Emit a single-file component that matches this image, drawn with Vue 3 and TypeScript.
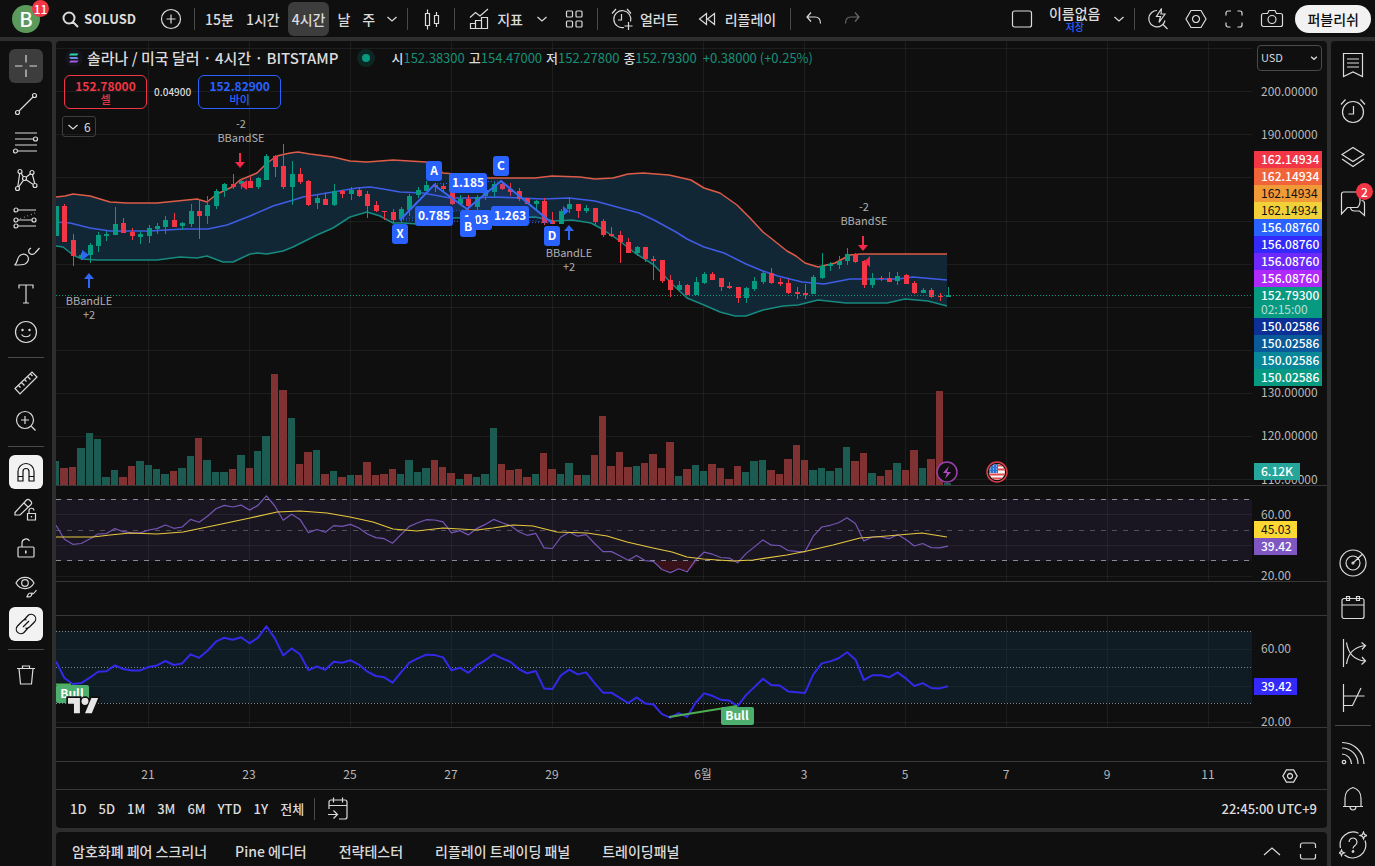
<script setup lang="ts">
import { ref } from 'vue'

type Candle = [dir: 0 | 1, top: number, bottom: number, high: number, low: number]
type Point = [number, number]

/* ---------- icons: stroked paths on a 28 unit box ---------- */
const ring = (x: number, y: number, r: number) =>
  `M${x - r} ${y}a${r} ${r} 0 1 0 ${2 * r} 0a${r} ${r} 0 1 0 ${-2 * r} 0`

const icons: Record<string, string> = {
  search: ring(13, 13, 5.5) + 'M17 17l5 5',
  plusCircle: ring(14, 14, 9.5) + 'M14 9.5v9M9.5 14h9',
  chevron: 'M9.5 12l4.5 4 4.5-4',
  chevronUp: 'M6 18l8-7 8 7',
  candles: 'M8.5 8.5h4v12h-4zM10.500 4.500v4M10.500 20.500v4M17.500 10.500h4v8h-4zM19.500 7v3.500M19.500 18.500v3.500',
  indicators: 'M5 12.500l5.500-5 4.500 3.500 8-7M5.500 23.500v-5h5v5zM10.500 23.500v-8h6v8zM16.500 23.500v-11h6v11z',
  grid: 'M7.500 6h4a1 1 0 0 1 1 1v4a1 1 0 0 1-1 1h-4a1 1 0 0 1-1-1v-4a1 1 0 0 1 1-1zM17 6h4a1 1 0 0 1 1 1v4a1 1 0 0 1-1 1h-4a1 1 0 0 1-1-1v-4a1 1 0 0 1 1-1zM7.500 16h4a1 1 0 0 1 1 1v4a1 1 0 0 1-1 1h-4a1 1 0 0 1-1-1v-4a1 1 0 0 1 1-1zM17 16h4a1 1 0 0 1 1 1v4a1 1 0 0 1-1 1h-4a1 1 0 0 1-1-1v-4a1 1 0 0 1 1-1z',
  alertAdd: 'M16 22.500a8.500 8.500 0 1 1 6.500-6M13.500 9v6H10M4 8.500l4-4.500M19 4l4 4.500M20.500 17v8M16.500 21h8',
  rewind: 'M13.500 8.500v11l-7-5.500zM21.500 8.500v11l-7-5.500z',
  undo: 'M11 7.500l-4 4.500 4 4.500M7 12h8c4 0 5.500 2.500 5.500 6.500',
  redo: 'M17 7.500l4 4.500-4 4.500M21 12h-8c-4 0-5.500 2.500-5.500 6.500',
  layout: 'M6.500 6h15a2 2 0 0 1 2 2v12a2 2 0 0 1-2 2h-15a2 2 0 0 1-2-2v-12a2 2 0 0 1 2-2z',
  quickSearch: 'M13 5.500a8.200 8.200 0 1 0 8 10M19 19.500l4.500 4.500M17.500 3.500l-5 8h4l-1.500 6 6-8.500h-4z',
  hexagon: 'M9 5.500h10l5 8.500-5 8.500h-10l-5-8.500z' + ring(14, 14, 3.5),
  fullscreen: 'M6 10.500v-2.500a2 2 0 0 1 2-2h3M17.500 6h2.500a2 2 0 0 1 2 2v2.500M22 17.500v2.500a2 2 0 0 1-2 2h-2.500M10.500 22h-2.500a2 2 0 0 1-2-2v-2.500',
  camera: 'M5.500 8.500h4l1.500-3h6l1.500 3h4a2 2 0 0 1 2 2v9a2 2 0 0 1-2 2h-17a2 2 0 0 1-2-2v-9a2 2 0 0 1 2-2z' + ring(14, 14.5, 4),
  crosshair: 'M14 3v7.500M14 17.500v7.500M3 14h7.500M17.500 14h7.500',
  trend: ring(5.5, 22.5, 2) + ring(22.5, 5.5, 2) + 'M7 21l14-14',
  fib: 'M3 5h22M3 11h18M3 17h22M6 23h19' + ring(23.5, 11, 2) + ring(3.5, 23, 2),
  pattern: ring(5.5, 22.5, 2) + ring(8, 5.5, 2) + ring(12.5, 12.5, 2) + ring(20, 6.5, 2) + ring(23, 19.5, 2) +
    'M5.800 20.500l1.900-13M9.200 7.200l2.200 3.700M14 11.200l4.500-3.500M20.400 8.500l2.300 9M6.700 20.800l4.700-6.500M14.200 13.700l7 4.700',
  projection: ring(4, 6, 2) + ring(4, 16, 2) + ring(22, 16, 2) + ring(4, 22, 2) +
    'M6 6h18M6 16h14M6 22h18M8.500 14.500l.6-.2M12 13.200l.6-.2M15.500 11.900l.6-.2M19 10.600l.6-.2M22.500 9.200l.6-.2',
  brush: 'M2.500 23c3-1.500 2.500-6 4.500-8.500 2.500-3 6.500-3 8.500-.5 2 3 .500 6.500-2.500 8-2.500 1-6 1-10.500 1zM17 7.500c-1.500 4 3.500 7 6.500 3l4-4.500M17 7.500l2-1.500',
  text: 'M7 8.500v-3.500h14v3.500M14 5v18M11 23h6',
  smile: ring(14, 14, 10.5) + ring(10.5, 12, 0.6) + ring(17.5, 12, 0.6) + 'M9.500 16.500c2 3 7 3 9 0',
  ruler: 'M3 19.500l17-16.500 5 5-17 17zM6.500 16.500l2 2M9.500 13.500l3 3M12.500 10.500l2 2M15.500 7.500l3 3M18.500 5l2 2',
  zoomIn: ring(13, 13, 8.5) + 'M13 9v8M9 13h8M19.500 19.500l4 4',
  magnet: 'M6 23v-9.500a8 8 0 0 1 16 0v9.500h-5v-9.500a3 3 0 0 0-6 0v9.500zM6 18.500h5M17 18.500h5',
  pencilLock: 'M3 16.500l11.500-12.500a2 2 0 0 1 3 0l1.500 1.500a2 2 0 0 1 0 3l-11 10.500h-5zM12 7l4.500 4.500M15.500 17.500h8v6.500h-8zM17 17.500v-2.500a2.500 2.500 0 0 1 5-.5M19.500 20v1.500',
  lock: 'M7 13h14a1 1 0 0 1 1 1v8a1 1 0 0 1-1 1h-14a1 1 0 0 1-1-1v-8a1 1 0 0 1 1-1zM10 13v-4a4 4 0 0 1 7.500-2M14 16.500v3M13.600 16.500v3',
  eyeBrush: 'M4 11c4-7.500 14-7.500 18 0-4 7.500-14 7.500-18 0z' + ring(13, 11, 3.3) + 'M14.500 25c1.500-.500 1-4 3.500-4 2 0 2 2.500.500 3.500-1 .500-2.500.500-4 .500zM20 20.500c0 2 1.500 1.500 2.500 0l2-2.500',
  link: 'M12 10l4-4.500a4.600 4.600 0 0 1 6.500 6.500l-5 5a4.600 4.600 0 0 1-4 1.200M16 18l-4 4.500a4.600 4.600 0 0 1-6.500-6.500l5-5a4.600 4.600 0 0 1 4-1.200M11 17l6-6',
  trash: 'M5 7.500h18M10.500 7.500v-2.500h7v2.500M7 7.500l1.500 15.500h11l1.500-15.500',
  watchlist: 'M4.500 2.500h19v23l-9.500-4.500-9.500 4.500zM8 8h12M8 12h12M8 16h12',
  alarm: ring(14, 15, 10.5) + 'M14.500 9v8H9.500M2 7.500l4.500-5M21.500 2.500l4.500 5',
  layers: 'M3 11.500l11-7 11 7-11 7zM3 16l11 7.500 11-7.500',
  chat: 'M2.500 25v-20a2 2 0 0 1 2-2h14.500a2 2 0 0 1 2 2v8c0 3-1 4-2.500 5.500h-10zM22.500 11.500a3 3 0 0 1 3 3v12l-5-4.500h-5a4 4 0 0 1-4-3.500',
  target: ring(14, 14, 13) + ring(14, 14, 7) + ring(14, 14, 1) + 'M14 14l9-8.500',
  calendar: 'M5 4.500h18a2 2 0 0 1 2 2v16a2 2 0 0 1-2 2h-18a2 2 0 0 1-2-2v-16a2 2 0 0 1 2-2zM3 11h22M7.500 2.500h3v4h-3zM17.500 2.500h3v4h-3z',
  forecast: 'M4.500 0v28M7.500 3.500c1.500 10 7 17.500 18.500 18.500M7.500 25c1.500-10 7-17 18.500-18.500M22.500 3.500l4 3-3.500 4M23 18l3.500 4-4 3.500',
  spread: 'M4.500 0v28M4.500 12h21M4.500 21.500h9l8.500-17.500',
  feed: ring(5, 23, 1.7) + 'M3 15a10 10 0 0 1 9.500 10M3 9a16 16 0 0 1 16 16M3 3.500a22 22 0 0 1 22 21.500',
  bell: 'M4 21.500h20M6 21.500v-8c0-6 3-9.500 8-11 5 1.500 8 5 8 11v8M11 22c.500 4 5.500 4 6 0',
  help: 'M19.500 2.200a13 13 0 0 0-18 14.800M5.500 24a13 13 0 0 0 20.500-14.500M10 11a4 4 0 1 1 6 3.500c-1.500 1-2 1.500-2 3' + ring(14, 20.5, 0.8) + 'M24.500 1l1 2.500 2.500 1-2.500 1-1 2.500-1-2.500-2.500-1 2.500-1zM2.500 19l.8 2 2 .8-2 .8-.8 2-.8-2-2-.8 2-.8z',
  goTo: 'M6 14v-7a2 2 0 0 1 2-2h14a2 2 0 0 1 2 2v15a2 2 0 0 1-2 2h-6M6 10.500h18M10.500 2.500v5M19.500 2.500v5M5 19.500h9M10.500 15.500l4 4-4 4',
  maximize: 'M6.500 11v-3a2 2 0 0 1 2-2h11a2 2 0 0 1 2 2v3M21.500 17v3a2 2 0 0 1-2 2h-11a2 2 0 0 1-2-2v-3',
}

const intervals = ['15분', '1시간', '4시간', '날', '주']
const interval = ref('4시간')
const currency = ref('USD')

const tools: { icon: string; label: string; look?: string; rule?: boolean }[] = [
  { icon: 'crosshair', label: '크로스', look: 'hovered' },
  { icon: 'trend', label: '추세선' },
  { icon: 'fib', label: '피보나치' },
  { icon: 'pattern', label: '패턴' },
  { icon: 'projection', label: '예측' },
  { icon: 'brush', label: '브러시' },
  { icon: 'text', label: '텍스트' },
  { icon: 'smile', label: '아이콘' },
  { icon: 'ruler', label: '측정', rule: true },
  { icon: 'zoomIn', label: '확대' },
  { icon: 'magnet', label: '자석', look: 'on', rule: true },
  { icon: 'pencilLock', label: '드로잉 유지' },
  { icon: 'lock', label: '드로잉 잠금' },
  { icon: 'eyeBrush', label: '드로잉 숨기기' },
  { icon: 'link', label: '동기화', look: 'on' },
  { icon: 'trash', label: '삭제', rule: true },
]
const sideTop = [['watchlist', '왓치리스트'], ['alarm', '얼러트'], ['layers', '오브젝트'], ['chat', '채팅']]
const sideMid = [['target', '스크리너'], ['calendar', '캘린더'], ['forecast', '예측'], ['spread', '스프레드']]
const sideEnd = [['feed', '피드'], ['bell', '알림'], ['help', '도움말']]
const ranges = ['1D', '5D', '1M', '3M', '6M', 'YTD', '1Y', '전체']
const tabs = ['암호화폐 페어 스크리너', 'Pine 에디터', '전략테스터', '리플레이 트레이딩 패널', '트레이딩패널']
const ohlc = [['시', '152.38300'], ['고', '154.47000'], ['저', '152.27800'], ['종', '152.79300']]

/* ---------- chart data ---------- */
const STEP = 8.415
const barX = (i: number) => i * STEP
const slot = (i: number) => Math.round((i - 0.5) * STEP + 0.2)
const VOLUME_BASE = 444
const TOP = 41
const LEFT = 56

const candles: Candle[] = [
  [1, 206, 236, 206, 236], [0, 206, 242, 204, 242], [0, 240, 256, 234, 266], [1, 255, 258, 253, 260],
  [1, 245, 255, 243, 263], [1, 235, 246, 232, 252], [1, 234, 236, 231, 241], [1, 224, 235, 207, 235],
  [0, 223, 233, 218, 233], [0, 232, 236, 228, 240], [1, 234, 237, 231, 244], [1, 228, 236, 225, 243],
  [1, 226, 229, 223, 234], [1, 220, 227, 216, 234], [0, 220, 227, 213, 227], [1, 223, 226, 222, 230],
  [1, 211, 224, 204, 227], [0, 211, 216, 199, 239], [1, 205, 216, 196, 224], [1, 191, 206, 189, 209],
  [1, 184, 191, 183, 197], [0, 184, 187, 174, 189], [1, 181, 184, 179, 189], [0, 181, 188, 177, 188],
  [1, 178, 187, 177, 189], [1, 156, 180, 154, 180], [0, 156, 167, 155, 177], [0, 166, 187, 144, 189],
  [1, 174, 187, 161, 205], [0, 174, 182, 168, 184], [0, 181, 205, 180, 206], [1, 198, 203, 195, 209],
  [0, 199, 205, 193, 205], [1, 191, 205, 184, 206], [0, 191, 194, 190, 198], [1, 190, 194, 187, 200],
  [0, 190, 196, 187, 197], [0, 194, 206, 191, 218], [0, 205, 211, 201, 212], [0, 211, 212, 211, 220],
  [0, 212, 220, 209, 223], [1, 209, 219, 207, 223], [1, 196, 210, 194, 216], [1, 190, 195, 187, 198],
  [1, 185, 191, 181, 191], [0, 185, 187, 183, 192], [0, 186, 189, 183, 193], [0, 188, 204, 187, 205],
  [1, 199, 204, 195, 205], [0, 199, 206, 195, 213], [1, 197, 207, 195, 210], [1, 190, 196, 188, 200],
  [1, 184, 192, 182, 197], [0, 184, 189, 181, 190], [0, 189, 192, 183, 196], [0, 191, 199, 188, 201],
  [0, 198, 204, 198, 204], [1, 201, 204, 200, 210], [0, 201, 223, 198, 225], [0, 221, 224, 212, 224],
  [1, 211, 224, 209, 224], [1, 204, 209, 197, 213], [0, 204, 211, 204, 218], [1, 208, 211, 205, 213],
  [0, 208, 222, 208, 225], [0, 221, 235, 219, 237], [0, 234, 236, 227, 237], [0, 235, 242, 231, 263],
  [0, 242, 253, 238, 253], [1, 247, 253, 246, 256], [0, 247, 259, 247, 262], [0, 259, 261, 256, 280],
  [0, 260, 281, 260, 283], [0, 280, 290, 275, 297], [1, 285, 290, 281, 291], [0, 285, 295, 284, 295],
  [1, 282, 295, 277, 295], [1, 274, 283, 272, 284], [0, 274, 280, 272, 280], [0, 278, 287, 278, 291],
  [0, 286, 288, 282, 289], [0, 287, 298, 287, 303], [1, 288, 298, 287, 303], [1, 281, 289, 277, 291],
  [1, 273, 282, 271, 284], [0, 273, 283, 268, 284], [0, 282, 284, 278, 286], [0, 283, 293, 279, 294],
  [0, 292, 294, 287, 299], [0, 293, 295, 284, 299], [1, 277, 294, 275, 294], [1, 266, 278, 253, 279],
  [1, 264, 266, 262, 271], [1, 261, 265, 256, 269], [1, 254, 261, 248, 265], [0, 254, 262, 253, 263],
  [0, 261, 285, 260, 288], [1, 278, 285, 273, 288], [0, 278, 279, 276, 281], [0, 278, 282, 272, 282],
  [1, 276, 281, 272, 285], [0, 275, 284, 274, 284], [0, 283, 293, 281, 294], [1, 290, 293, 288, 293],
  [0, 290, 297, 288, 298], [0, 296, 297, 293, 301], [1, 295, 297, 287, 297],
]
const volumes = [
  24, 17, 18, 37, 52, 46, 8, 15, 8, 19, 24, 20, 16, 11, 14, 17, 29, 47, 25, 13, 13, 16, 30, 17, 34, 49, 111, 95, 67,
  21, 33, 35, 11, 14, 8, 10, 10, 23, 10, 11, 16, 11, 25, 13, 17, 25, 18, 12, 6, 11, 8, 11, 57, 21, 15, 16, 8, 11, 32,
  16, 11, 22, 10, 10, 30, 69, 19, 33, 18, 19, 22, 31, 17, 43, 9, 16, 20, 14, 21, 17, 6, 19, 13, 24, 25, 15, 11, 26, 40,
  25, 15, 17, 14, 17, 38, 24, 32, 12, 9, 15, 22, 15, 35, 17, 26, 94, 2,
]
const rsi = [
  53.1, 43.9, 40.6, 41.1, 44.1, 47.4, 47.6, 50.9, 48.9, 48.1, 48.1, 50, 50.9, 53.3, 51.1, 52, 57, 55.1, 59, 64, 66.2,
  65.1, 66.4, 63.1, 66.2, 72.5, 65.8, 56.4, 60.3, 57, 48.3, 50.3, 48.5, 52.9, 52.4, 53.7, 51.3, 47.4, 45, 44.3, 41.3,
  47, 52.4, 54.8, 56.8, 56.6, 55.3, 48.1, 49.6, 46.8, 50.9, 53.7, 57, 54.8, 52.9, 48.9, 46.5, 47.8, 38.2, 37.8, 45.4,
  48.5, 45.9, 47, 41.1, 35.8, 35.8, 33, 30.1, 33.2, 29.9, 29.3, 24, 22, 24.5, 22.5, 30.1, 35.4, 34.1, 31.9, 31.5,
  28.4, 34.5, 38.9, 43.5, 40, 39.8, 36.5, 36, 35.6, 45.9, 52, 53.1, 54.8, 58.1, 54.2, 42.8, 45.4, 45.4, 44.3, 47,
  43.7, 39.5, 41.1, 38.4, 38.2, 39.4,
]
const upper: Point[] = [
  [56, 197], [65, 196], [73, 194], [90, 196], [110, 202], [127, 203], [157, 203], [177, 201], [197, 199], [207, 202],
  [217, 194], [232, 187], [240, 180], [250, 176], [257, 173], [267, 163], [277, 156], [290, 153], [298, 152],
  [310, 154], [333, 157], [350, 161], [367, 162], [380, 161], [393, 160], [426, 162], [443, 173], [455, 174],
  [470, 178], [502, 178], [535, 178], [552, 176], [580, 177], [595, 179], [613, 178], [628, 174], [643, 173],
  [669, 175], [691, 180], [704, 188], [720, 193], [737, 205], [750, 218], [763, 232], [772, 239], [787, 251],
  [796, 256], [805, 263], [818, 267], [835, 263], [850, 255], [861, 254], [947, 254],
]
const middle: Point[] = [
  [56, 222], [70, 223], [90, 228], [110, 231], [150, 231], [183, 229], [208, 229], [227, 225], [250, 216], [273, 206],
  [290, 201], [303, 197], [333, 192], [357, 188], [370, 187], [383, 189], [400, 192], [423, 193], [450, 198],
  [469, 198], [495, 197], [543, 199], [569, 198], [595, 201], [617, 207], [639, 213], [654, 220], [676, 232],
  [687, 239], [704, 247], [724, 253], [746, 264], [763, 271], [778, 276], [802, 282], [824, 284], [850, 279],
  [898, 279], [913, 277], [947, 280],
]
const lower: Point[] = [
  [56, 246], [63, 247], [73, 255], [82, 259], [97, 260], [157, 260], [180, 257], [197, 258], [207, 256], [223, 262],
  [233, 262], [250, 254], [257, 253], [267, 254], [283, 251], [293, 247], [317, 235], [333, 228], [350, 217],
  [367, 212], [380, 216], [393, 223], [403, 223], [417, 224], [454, 218], [535, 217], [554, 221], [572, 220],
  [591, 223], [602, 229], [617, 239], [635, 253], [654, 265], [672, 284], [687, 298], [704, 305], [720, 312],
  [735, 316], [746, 316], [763, 310], [783, 306], [798, 305], [818, 300], [846, 303], [887, 303], [905, 299],
  [928, 301], [947, 306],
]
const average: Point[] = [
  [56, 537], [93, 537], [110, 535], [130, 533], [157, 534], [183, 532], [217, 525], [250, 518], [277, 512], [300, 511],
  [327, 513], [350, 517], [373, 522], [393, 529], [417, 531], [443, 528], [477, 530], [493, 528], [513, 525],
  [533, 526], [557, 532], [587, 533], [607, 536], [627, 542], [653, 548], [672, 552], [687, 557], [703, 559],
  [733, 561], [753, 560], [787, 555], [807, 551], [833, 545], [860, 538], [887, 536], [922, 533], [947, 537],
]
const toLine = (pts: Point[]) => pts.map(([x, y]) => `${x - LEFT},${y - TOP}`).join(' ')
const bandFill = toLine([...upper, ...[...lower].reverse()])
const rsiLine = (mid: number, scale: number) =>
  rsi.map((v, i) => `${barX(i).toFixed(1)},${(mid + (50 - v) * scale).toFixed(1)}`).join(' ')
const rsiSmall = rsiLine(489, 1.52)
const rsiLarge = rsiLine(626, 1.81)

const hGrid = [7, 50, 93, 136, 180, 223, 266, 309, 352, 395, 438, 473, 504, 535, 608, 645, 681]
const days = [
  [92, '21'], [193, '23'], [294, '25'], [395, '27'], [496, '29'], [647, '6월'], [748, '3'], [849, '5'], [950, '7'],
  [1051, '9'], [1152, '11'],
] as const
const panes = [[0, 444], [446, 94], [575, 111]]
const separators = [444, 540, 574, 686]

const ticks: [number, string][] = [
  [50, '200.00000'], [93, '190.00000'], [351, '130.00000'], [394, '120.00000'], [438, '110.00000'],
  [473, '60.00'], [534, '20.00'], [607, '60.00'], [680, '20.00'],
]
const tags: { y: number; h?: number; w?: number; text: string; bg: string; dark?: boolean }[] = [
  { y: 110, text: '162.14934', bg: '#f23645' },
  { y: 127, text: '162.14934', bg: '#f1643a' },
  { y: 144, text: '162.14934', bg: '#f19a38', dark: true },
  { y: 161, text: '162.14934', bg: '#f2d03a', dark: true },
  { y: 178, text: '156.08760', bg: '#2962ff' },
  { y: 195, text: '156.08760', bg: '#3329fb' },
  { y: 212, text: '156.08760', bg: '#6d29fb' },
  { y: 229, text: '156.08760', bg: '#b029fb' },
  { y: 246, h: 31, text: '152.79300', bg: '#089981' },
  { y: 277, text: '150.02586', bg: '#0d3096' },
  { y: 294, text: '150.02586', bg: '#0a5a99' },
  { y: 311, text: '150.02586', bg: '#088799' },
  { y: 328, text: '150.02586', bg: '#089981' },
  { y: 422, w: 46, text: '6.12K', bg: '#26a69a' },
  { y: 480, w: 43, text: '45.03', bg: '#fdd835', dark: true },
  { y: 497, w: 43, text: '39.42', bg: '#7e57c2' },
  { y: 637, w: 43, text: '39.42', bg: '#3329fb' },
]
const marks: { x: number; y: number; w: number; text: string }[] = [
  { x: 393, y: 132, w: 38, text: '1.185' },
  { x: 359, y: 165, w: 38, text: '0.785' },
  { x: 404, y: 169, w: 32, text: '1.03' },
  { x: 435, y: 165, w: 38, text: '1.263' },
  { x: 336, y: 183, w: 16, text: 'X' },
  { x: 370, y: 120, w: 16, text: 'A' },
  { x: 404, y: 176, w: 16, text: 'B' },
  { x: 437, y: 115, w: 16, text: 'C' },
  { x: 488, y: 185, w: 16, text: 'D' },
]
const signals = [
  { x: 33, y: 232, up: true }, { x: 513, y: 184, up: true },
  { x: 184, y: 112, up: false }, { x: 807, y: 195, up: false },
]
</script>

<template>
  <div class="app">
    <header class="topbar">
      <button class="avatar" aria-label="메뉴">B<span class="badge">11</span></button>
      <button class="tb symbol">
        <svg class="ic bold" viewBox="0 0 28 28"><path :d="icons.search" /></svg>SOLUSD
      </button>
      <button class="tb icon" aria-label="심볼 비교"><svg class="ic" viewBox="0 0 28 28"><path :d="icons.plusCircle" /></svg></button>
      <i class="sep"></i>
      <button v-for="t in intervals" :key="t" class="tb" :class="{ active: t === interval }" @click="interval = t">{{ t }}</button>
      <button class="tb arrow" aria-label="차트 간격"><svg class="ic" viewBox="0 0 28 28"><path :d="icons.chevron" /></svg></button>
      <i class="sep"></i>
      <button class="tb icon" aria-label="캔들"><svg class="ic" viewBox="0 0 28 28"><path :d="icons.candles" /></svg></button>
      <i class="sep"></i>
      <button class="tb labelled"><svg class="ic" viewBox="0 0 28 28"><path :d="icons.indicators" /></svg>지표</button>
      <button class="tb arrow wide" aria-label="즐겨찾기"><svg class="ic" viewBox="0 0 28 28"><path :d="icons.chevron" /></svg></button>
      <button class="tb icon" aria-label="템플릿"><svg class="ic" viewBox="0 0 28 28"><path :d="icons.grid" /></svg></button>
      <i class="sep"></i>
      <button class="tb labelled"><svg class="ic" viewBox="0 0 28 28"><path :d="icons.alertAdd" /></svg>얼러트</button>
      <button class="tb labelled replay"><svg class="ic" viewBox="0 0 28 28"><path :d="icons.rewind" /></svg>리플레이</button>
      <i class="sep"></i>
      <button class="tb icon" aria-label="실행 취소"><svg class="ic" viewBox="0 0 28 28"><path :d="icons.undo" /></svg></button>
      <button class="tb icon faded" aria-label="다시 실행"><svg class="ic" viewBox="0 0 28 28"><path :d="icons.redo" /></svg></button>
      <span class="grow"></span>
      <button class="tb icon" aria-label="레이아웃"><svg class="ic" viewBox="0 0 28 28"><path :d="icons.layout" /></svg></button>
      <button class="tb layout-name"><span>이름없음</span><small>저장</small></button>
      <button class="tb arrow" aria-label="레이아웃 관리"><svg class="ic" viewBox="0 0 28 28"><path :d="icons.chevron" /></svg></button>
      <i class="sep"></i>
      <button class="tb icon" aria-label="빠른 찾기"><svg class="ic" viewBox="0 0 28 28"><path :d="icons.quickSearch" /></svg></button>
      <button class="tb icon" aria-label="설정"><svg class="ic" viewBox="0 0 28 28"><path :d="icons.hexagon" /></svg></button>
      <button class="tb icon" aria-label="전체 화면"><svg class="ic" viewBox="0 0 28 28"><path :d="icons.fullscreen" /></svg></button>
      <button class="tb icon" aria-label="스냅샷"><svg class="ic" viewBox="0 0 28 28"><path :d="icons.camera" /></svg></button>
      <button class="publish">퍼블리쉬</button>
    </header>

    <nav class="tools">
      <template v-for="t in tools" :key="t.icon">
        <hr v-if="t.rule" />
        <button class="tool" :class="t.look" :aria-label="t.label">
          <svg class="ic" viewBox="0 0 28 28"><path :d="icons[t.icon]" /></svg>
        </button>
      </template>
    </nav>

    <main class="center">
      <section class="chart">
        <div class="row">
          <div class="plot">
            <svg class="canvas">
              <line v-for="y in hGrid" :key="'h' + y" class="gridline" x1="0" x2="100%" :y1="y + 0.5" :y2="y + 0.5" />
              <template v-for="[top, h] in panes" :key="'p' + top">
                <line v-for="[x] in days" :key="x" class="gridline" :x1="x + 0.5" :x2="x + 0.5" :y1="top" :y2="top + h" />
              </template>

              <polygon :points="bandFill" fill="#132a3a" fill-opacity=".9" />
              <rect v-for="(v, i) in volumes" :key="'v' + i" :x="slot(i)" :y="VOLUME_BASE - v" :width="slot(i + 1) - slot(i) - 1" :height="v" :fill="candles[i][0] ? '#1b5b51' : '#803232'" />
              <polyline class="line" :points="toLine(middle)" stroke="#3f5ce6" />
              <polyline class="line" :points="toLine(lower)" stroke="#178a80" />
              <polyline class="line" :points="toLine(upper)" stroke="#dd5c48" />
              <g v-for="([up, t, b, hi, lo], i) in candles" :key="'c' + i" :fill="up ? '#089981' : '#f23645'">
                <rect :x="Math.round(barX(i))" :y="hi - TOP" width="1" :height="lo - hi" />
                <rect :x="Math.round(barX(i)) - 2" :y="t - TOP" width="5" :height="b - t" />
              </g>
              <line x1="0" x2="100%" y1="254.500" y2="254.500" stroke="#089981" stroke-dasharray="1 2" />

              <polygon points="344,179 378,144 411,168" class="pattern-fill" />
              <polygon points="411,168 445,140 496,182" class="pattern-fill" />
              <polyline points="344,179 378,144 411,168 445,140 496,182" fill="none" stroke="#3a68f5" stroke-width="2" />
              <path d="M344 179L411 168M378 143L445 140M411 172L496 182M344 179L496 182" stroke="#2962ff" stroke-dasharray="1 2" />
              <g v-for="m in marks" :key="m.text">
                <rect :x="m.x" :y="m.y" :width="m.w" height="20" rx="3" fill="#2962ff" />
                <text :x="m.x + m.w / 2" :y="m.y + 14" class="mark">{{ m.text }}</text>
              </g>

              <path v-for="s in signals" :key="'s' + s.x" :transform="`translate(${s.x} ${s.y})`" :d="s.up ? 'M0 0l5 6h-4v9h-2v-9h-4z' : 'M0 15l5-6h-4v-9h-2v9h-4z'" :fill="s.up ? '#2f66f5' : '#f5284a'" />
              <path d="M26 209v10l7-5zM507 165v10l6-5z" fill="#2f66f5" />
              <path d="M191 139v10l-7-5zM814 215v11l-6-5z" fill="#f5284a" />
              <g class="note">
                <text x="185" y="87">-2</text><text x="185" y="101">BBandSE</text>
                <text x="808" y="170">-2</text><text x="808" y="184">BBandSE</text>
                <text x="33" y="264">BBandLE</text><text x="33" y="278">+2</text>
                <text x="513" y="216">BBandLE</text><text x="513" y="230">+2</text>
              </g>

              <circle cx="891" cy="431" r="10" fill="#0f0f0f" stroke="#9c3fb0" stroke-width="1.500" />
              <path d="M893 425l-6 7h4l-2 6 6-7h-4z" fill="#b347c6" />
              <circle cx="941" cy="431" r="10" fill="#0f0f0f" stroke="#e0404a" stroke-width="1.500" />
              <clipPath id="flag"><circle cx="941" cy="431" r="8" /></clipPath>
              <g clip-path="url(#flag)">
                <rect x="933" y="423" width="16" height="16" fill="#f4f4f4" />
                <path d="M933 424.500h16M933 428.500h16M933 433.500h16M933 437.500h16" stroke="#e5484d" stroke-width="2" />
                <rect x="933" y="423" width="9" height="9" fill="#2b73d2" />
                <path d="M934 425h8M934 428h8M934 431h8" stroke="#cfe0f7" stroke-dasharray="1 2" />
              </g>

              <rect x="0" y="458" width="100%" height="62" fill="#7e57c2" fill-opacity=".1" />
              <path class="oversold" d="M599 520h43l-6 7-8 3-8-2-8 2-7-2z" />
              <g class="dashes">
                <line x1="0" x2="100%" y1="458.500" y2="458.500" />
                <line x1="0" x2="100%" y1="489.500" y2="489.500" opacity=".5" />
                <line x1="0" x2="100%" y1="519.500" y2="519.500" />
              </g>
              <polyline class="line thin" :points="rsiSmall" stroke="#7555b5" />
              <polyline class="line thin" :points="toLine(average)" stroke="#e5c83e" />

              <rect x="0" y="590" width="100%" height="72" fill="#123246" fill-opacity=".38" />
              <g class="dots">
                <line x1="0" x2="100%" y1="590.500" y2="590.500" />
                <line x1="0" x2="100%" y1="626.500" y2="626.500" />
                <line x1="0" x2="100%" y1="662.500" y2="662.500" />
              </g>
              <polyline :points="rsiLarge" fill="none" stroke="#3329e8" stroke-width="2" stroke-linejoin="round" />
              <path d="M613 676L681 665M0 643.500h15" stroke="#4caf50" stroke-width="2" />
              <g fill="#4caf6e"><rect x="665" y="666" width="33" height="18" rx="2" /><rect x="0" y="644" width="33" height="18" rx="2" /></g>
              <text class="mark" x="681" y="679">Bull</text>
              <text class="mark" x="16" y="657">Bull</text>
              <g transform="translate(12 653.500) scale(.85)" fill="#e6e6e6" stroke="#0f0f0f" stroke-width="4" paint-order="stroke">
                <circle cx="20" cy="8" r="4" /><path d="M14 22H7V11H0V4h14zM28 22h-8l7.500-18h8z" /><circle cx="20" cy="8" r="4" stroke="none" />
              </g>
              <line v-for="y in separators" :key="'s' + y" class="divider" x1="0" x2="100%" :y1="y + 0.5" :y2="y + 0.5" />
            </svg>

            <div class="legend">
              <div class="title">
                <svg class="sol" viewBox="0 0 18 18">
                  <circle cx="9" cy="9" r="9" fill="#16141c" />
                  <path d="M5.500 4.500h8l-1.500 2h-8z" fill="#2ad6b0" /><path d="M4 8h8l1.500 2h-8z" fill="#6f8fe0" /><path d="M5.500 11.500h8l-1.500 2h-8z" fill="#a35bea" />
                </svg>
                <h1>솔라나 / 미국 달러 · 4시간 · BITSTAMP</h1>
                <i class="live"></i>
                <dl>
                  <div v-for="[k, v] in ohlc" :key="k"><dt>{{ k }}</dt><dd>{{ v }}</dd></div>
                </dl>
                <span class="change">+0.38000 (+0.25%)</span>
              </div>
              <div class="trade">
                <button class="sell"><b>152.78000</b><span>셀</span></button>
                <span class="spread">0.04900</span>
                <button class="buy"><b>152.82900</b><span>바이</span></button>
              </div>
              <button class="collapse" aria-label="지표 6개"><svg class="ic" viewBox="7 7 14 14"><path :d="icons.chevron" /></svg>6</button>
            </div>
          </div>

          <div class="scale">
            <svg class="canvas">
              <text v-for="([y, t], i) in ticks" :key="i" class="tick" x="9" :y="y + 5">{{ t }}</text>
              <g v-for="t in tags" :key="t.y">
                <rect x="2" :y="t.y" :width="t.w ?? 68" :height="t.h ?? 17" :fill="t.bg" />
                <text x="9" :y="t.y + 13" class="tag" :class="{ dark: t.dark }">{{ t.text }}</text>
              </g>
              <text x="9" y="273" class="countdown">02:15:00</text>
              <line v-for="y in separators" :key="y" class="divider" x1="0" x2="100%" :y1="y + 0.5" :y2="y + 0.5" />
            </svg>
            <label class="currency">
              <select v-model="currency" aria-label="통화"><option>USD</option><option>KRW</option></select>
              <svg class="ic" viewBox="0 0 28 28"><path :d="icons.chevron" /></svg>
            </label>
          </div>
        </div>

        <div class="row axis">
          <svg class="time">
            <text v-for="[x, t] in days" :key="x" class="tick mid" :x="x" y="17">{{ t }}</text>
          </svg>
          <button class="axis-set" aria-label="축 설정"><svg class="ic" viewBox="0 0 28 28"><path :d="icons.hexagon" /></svg></button>
        </div>

        <div class="ranges">
          <button v-for="r in ranges" :key="r">{{ r }}</button>
          <i class="sep"></i>
          <button class="goto" aria-label="날짜로 이동"><svg class="ic" viewBox="0 0 28 28"><path :d="icons.goTo" /></svg></button>
          <span class="grow"></span>
          <button>22:45:00 UTC+9</button>
        </div>
      </section>

      <footer class="tabs">
        <button v-for="t in tabs" :key="t" class="tab">{{ t }}</button>
        <span class="grow"></span>
        <button class="end" aria-label="패널 열기"><svg class="ic" viewBox="0 0 28 28"><path :d="icons.chevronUp" /></svg></button>
        <button class="end" aria-label="패널 최대화"><svg class="ic" viewBox="0 0 28 28"><path :d="icons.maximize" /></svg></button>
      </footer>
    </main>

    <aside class="side">
      <div class="group top">
        <button v-for="[n, l] in sideTop" :key="n" :aria-label="l">
          <svg class="ic" viewBox="0 0 28 28"><path :d="icons[n]" /></svg>
          <span v-if="n === 'chat'" class="badge">2</span>
        </button>
      </div>
      <span class="grow"></span>
      <div class="group">
        <button v-for="[n, l] in sideMid" :key="n" :aria-label="l"><svg class="ic" viewBox="0 0 28 28"><path :d="icons[n]" /></svg></button>
      </div>
      <hr />
      <div class="group top">
        <button v-for="[n, l] in sideEnd" :key="n" :aria-label="l"><svg class="ic" viewBox="0 0 28 28"><path :d="icons[n]" /></svg></button>
      </div>
    </aside>
  </div>
</template>

<style>
body {
  margin: 0;
  background: #2e2e2e;
}
</style>

<style scoped>
.app {
  display: grid;
  grid-template: 37px 1fr / 52px minmax(0, 1fr) 44px;
  gap: 4px;
  height: 100vh;
  min-height: 866px;
  background: #2e2e2e;
  color: #dbdbdb;
  font: 14px/18px "Noto Sans CJK KR", "Noto Sans", sans-serif;
}
.app * {
  box-sizing: border-box;
}
button {
  margin: 0;
  padding: 0;
  border: 0;
  background: none;
  color: inherit;
  font: inherit;
  white-space: nowrap;
  cursor: pointer;
}
.ic {
  display: block;
  flex: none;
  width: 28px;
  height: 28px;
  fill: none;
  stroke: currentColor;
  stroke-width: 1.2;
}
.ic.bold {
  stroke-width: 2;
}
.grow {
  flex: 1;
}
.badge {
  position: absolute;
  display: grid;
  place-items: center;
  height: 17px;
  min-width: 17px;
  border-radius: 9px;
  background: #f23645;
  color: #fff;
  font-size: 12px;
  font-weight: 500;
  line-height: 17px;
}

/* top bar */
.topbar {
  grid-column: 1 / -1;
  display: flex;
  align-items: center;
  gap: 4px;
  padding: 0 4px 0 12px;
  background: #0f0f0f;
  font-weight: 500;
}
.avatar {
  position: relative;
  width: 28px;
  height: 28px;
  border-radius: 50%;
  background: #5b9a5b;
  color: #fff;
  font-size: 20px;
  font-weight: 500;
  line-height: 28px;
}
.avatar .badge {
  top: -5px;
  left: 20px;
}
.tb {
  display: flex;
  align-items: center;
  justify-content: center;
  height: 34px;
  padding: 0 4px;
  border-radius: 6px;
}
.tb.active {
  background: #3d3d3d;
}
.tb.icon {
  width: 34px;
  padding: 0;
}
.tb.arrow {
  width: 18px;
  padding: 0;
}
.tb.wide {
  width: 22px;
}
.tb.faded {
  color: #6b6b6b;
}
.tb.symbol {
  margin: 0 6px 0 8px;
  font-size: 13px;
  font-weight: 700;
}
.tb.symbol + .tb {
  margin-left: 4px;
}
.tb.labelled {
  gap: 4px;
}
.tb.replay {
  margin: 0 4px 0 2px;
}
.sep {
  flex: none;
  width: 1px;
  height: 22px;
  margin: 0 2px;
  background: #4a4a4a;
}
.tb.layout-name {
  flex-direction: column;
  padding: 0 6px;
  line-height: 16px;
}
.layout-name small {
  color: #2962ff;
  font-size: 10px;
  line-height: 12px;
}
.publish {
  height: 28px;
  margin-left: 2px;
  padding: 0 12px;
  border-radius: 14px;
  background: #f2f2f2;
  color: #0f0f0f;
}

/* drawing tools */
.tools {
  display: flex;
  flex-direction: column;
  align-items: center;
  gap: 4px;
  padding-top: 8px;
  border-radius: 0 4px 0 0;
  background: #0f0f0f;
}
.tools hr,
.side hr {
  width: 36px;
  height: 1px;
  margin: 4px 0;
  border: 0;
  background: #4a4a4a;
}
.tool {
  display: grid;
  place-items: center;
  width: 34px;
  height: 34px;
  border-radius: 6px;
}
.tool.hovered {
  background: #3d3d3d;
}
.tool.on {
  background: #f2f2f2;
  color: #0f0f0f;
}

/* chart */
.center {
  display: flex;
  flex-direction: column;
  gap: 4px;
  min-width: 0;
}
.chart {
  flex: 1;
  display: flex;
  flex-direction: column;
  border-radius: 4px;
  background: #0f0f0f;
}
.row {
  display: flex;
  min-height: 720px;
}
.plot {
  position: relative;
  flex: 1;
  min-width: 0;
}
.scale {
  position: relative;
  width: 75px;
}
.canvas {
  display: block;
  width: 100%;
  height: 720px;
}
.gridline {
  stroke: #fff;
  stroke-opacity: 0.06;
}
.divider {
  stroke: #383838;
}
.line {
  fill: none;
  stroke-width: 1.5;
  stroke-linejoin: round;
}
.line.thin {
  stroke-width: 1.2;
}
.pattern-fill {
  fill: #2962ff;
  fill-opacity: 0.15;
}
.dashes line {
  stroke: #8a8a90;
  stroke-dasharray: 5 6;
}
.dots line {
  stroke: #78858c;
  stroke-dasharray: 1 2;
}
.oversold {
  fill: #3a121a;
}
.mark {
  fill: #fff;
  font-size: 12px;
  font-weight: 700;
  text-anchor: middle;
}
.note text {
  fill: #b2b2b2;
  font-size: 11px;
  text-anchor: middle;
}
.tick {
  fill: #b8b8b8;
  font-size: 12px;
}
.tick.mid {
  text-anchor: middle;
}
.tag {
  fill: #fff;
  font-size: 12px;
  font-weight: 500;
}
.tag.dark {
  fill: #131313;
  font-weight: 400;
}
.countdown {
  fill: #b5e0d9;
  font-size: 12px;
}

.legend {
  position: absolute;
  top: 7px;
  left: 6px;
}
.title {
  display: flex;
  align-items: center;
  height: 20px;
  padding-left: 3px;
  font-size: 13px;
}
.sol {
  width: 18px;
  height: 18px;
  margin-right: 4px;
}
h1 {
  margin: 0;
  font-size: 15px;
  font-weight: 500;
  line-height: 20px;
  white-space: nowrap;
}
.live {
  width: 8px;
  height: 8px;
  margin: 0 21px 0 24px;
  border-radius: 50%;
  background: #089981;
  box-shadow: 0 0 0 5px #0c2722;
}
dl {
  display: flex;
  gap: 4px;
  margin: 0;
}
dl div {
  display: flex;
}
dt {
  font-weight: 500;
}
dd {
  margin: 0;
  color: #169178;
}
.change {
  margin-left: 6px;
  color: #169178;
}
.trade {
  display: flex;
  align-items: center;
  gap: 7px;
  padding: 7px 0 7px 2px;
}
.trade button {
  width: 83px;
  height: 34px;
  border: 1px solid;
  border-radius: 6px;
}
.trade b,
.trade button span {
  display: block;
  font-size: 12px;
  font-weight: 700;
  line-height: 15px;
}
.trade button span {
  font-size: 11px;
  font-weight: 500;
  line-height: 13px;
}
.sell {
  color: #f23645;
}
.buy {
  color: #2962ff;
}
.spread {
  font-size: 10px;
  font-weight: 500;
}
.collapse {
  display: flex;
  align-items: center;
  gap: 4px;
  height: 21px;
  padding: 0 4px 0 3px;
  border: 1px solid #3d3d3d;
  border-radius: 3px;
  font-size: 12px;
}
.collapse .ic {
  width: 14px;
  height: 14px;
}
.currency {
  position: absolute;
  top: 4px;
  right: 5px;
  width: 65px;
  height: 26px;
}
.currency select {
  width: 100%;
  height: 100%;
  padding: 0 3px 2px;
  border: 1px solid #4a4a4a;
  border-radius: 4px;
  appearance: none;
  background: #0f0f0f;
  color: #dbdbdb;
  font: 11px "Noto Sans CJK KR", sans-serif;
}
.currency .ic {
  position: absolute;
  right: -1px;
  top: 4px;
  width: 18px;
  height: 18px;
  stroke-width: 2;
  pointer-events: none;
}
.row.axis {
  min-height: 28px;
  border-top: 1px solid #383838;
}
.time {
  flex: 1;
  height: 27px;
}
.axis-set {
  width: 75px;
}
.axis-set .ic {
  width: 20px;
  height: 20px;
  margin-left: 28px;
  stroke-width: 1.8;
}
.ranges {
  flex: 1;
  display: flex;
  align-items: center;
  gap: 12px;
  padding: 0 10px 0 14px;
  border-top: 1px solid #383838;
  font-size: 13px;
  font-weight: 500;
}
.ranges .sep {
  margin: 0 0 0 -2px;
}
.goto {
  margin-left: -4px;
}

/* bottom tabs */
.tabs {
  display: flex;
  align-items: center;
  gap: 32px;
  height: 34px;
  padding: 3px 5px 0 16px;
  border-radius: 4px 4px 0 0;
  background: #0f0f0f;
  font-weight: 500;
}
.tab:first-child {
  margin-right: -4px;
}
.tabs .end {
  margin-left: -24px;
}

/* right bar */
.side {
  display: flex;
  flex-direction: column;
  align-items: center;
  padding-top: 3px;
  border-radius: 4px 0 0 0;
  background: #0f0f0f;
}
.side .group {
  display: flex;
  flex-direction: column;
  gap: 3px;
}
.side .top {
  gap: 4px;
}
.side button {
  position: relative;
  display: grid;
  place-items: center;
  width: 44px;
  height: 42px;
}
.side .badge {
  top: 1px;
  right: 2px;
}
.side hr {
  margin: 6px 0;
}
</style>
